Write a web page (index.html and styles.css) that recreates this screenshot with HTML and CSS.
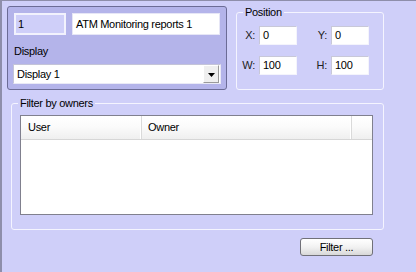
FILE: index.html
```html
<!DOCTYPE html>
<html>
<head>
<meta charset="utf-8">
<link rel="stylesheet" href="styles.css">
</head>
<body>
<div class="frame">
  <div class="top">
    <div class="panel">
      <div class="row">
        <div class="field id">1</div>
        <div class="field name">ATM Monitoring reports 1</div>
      </div>
      <div class="label">Display</div>
      <div class="select">
        <span class="select-text">Display 1</span>
        <span class="drop">
          <svg width="7" height="4" viewBox="0 0 7 4"><path d="M0 0H7L3.5 4Z" fill="#000"/></svg>
        </span>
      </div>
    </div>
    <fieldset class="group position">
      <legend>Position</legend>
      <div class="pos-grid">
        <span class="plabel">X:</span><div class="pin">0</div>
        <span class="plabel">Y:</span><div class="pin">0</div>
        <span class="plabel">W:</span><div class="pin">100</div>
        <span class="plabel">H:</span><div class="pin">100</div>
      </div>
    </fieldset>
  </div>
  <fieldset class="group owners">
    <legend>Filter by owners</legend>
    <div class="table">
      <div class="thead">
        <div class="th c1">User</div>
        <div class="th c2">Owner</div>
        <div class="th c3"></div>
      </div>
    </div>
  </fieldset>
  <div class="actions">
    <button class="btn">Filter ...</button>
  </div>
</div>
</body>
</html>
```

FILE: styles.css
```css
html, body {
  margin: 0;
  padding: 0;
}
body {
  background: #cfcff9;
  font-family: "Liberation Sans", Arial, sans-serif;
  font-size: 11px;
  letter-spacing: -0.3px;
  color: #000;
}
.frame {
  width: 416px;
  height: 272px;
  box-sizing: border-box;
  border-left: 2px solid #8e8eaa;
  border-top: 1px solid #8e8eaa;
  padding: 5px 0 0 5px;
  display: flex;
  flex-direction: column;
}
.top {
  display: flex;
  align-items: flex-start;
}
.panel {
  width: 220px;
  height: 84px;
  box-sizing: border-box;
  border: 1px solid #6c6c96;
  border-radius: 3px;
  background: #b4b4ea;
  padding: 6px 6px 0 6px;
  display: flex;
  flex-direction: column;
}
.row {
  display: flex;
  gap: 6px;
}
.field {
  height: 22px;
  box-sizing: border-box;
  display: flex;
  align-items: center;
  line-height: 13px;
}
.field.id {
  width: 52px;
  background: #cfcff9;
  border: 2px solid #f2f2fd;
  padding-left: 2px;
}
.field.name {
  width: 148px;
  background: #fff;
  border: 1px solid #e6e6f6;
  padding-left: 3px;
}
.label {
  line-height: 13px;
  margin-top: 10px;
}
.select {
  margin-top: 6px;
  margin-left: -1px;
  width: 208px;
  height: 20px;
  box-sizing: border-box;
  background: #fff;
  border: 1px solid #eaeaf6;
  border-top-color: #c4c4d8;
  border-left-color: #c4c4d8;
  display: flex;
  align-items: center;
  justify-content: space-between;
  padding: 0 1px 0 3px;
}
.select-text {
  line-height: 13px;
}
.drop {
  width: 16px;
  height: 18px;
  box-sizing: border-box;
  background: #efefef;
  border: 1px solid #fff;
  border-right-color: #9a9a9a;
  border-bottom-color: #9a9a9a;
  display: flex;
  align-items: center;
  justify-content: center;
}
.drop svg {
  display: block;
  margin-top: 1px;
}
.group {
  margin: 0;
  padding: 0;
  min-width: 0;
  border: 1px solid #f4f4ff;
  border-radius: 3px;
  box-sizing: border-box;
}
.group legend {
  margin-left: 6px;
  padding: 0 2px;
  line-height: 13px;
}
.position {
  margin-left: 9px;
  width: 148px;
  height: 84px;
}
.pos-grid {
  margin-top: 7px;
  display: grid;
  grid-template-columns: 22px 38px 34px 38px;
  grid-auto-rows: 19px;
  row-gap: 11px;
}
.plabel {
  text-align: right;
  padding-right: 4px;
  line-height: 19px;
  color: #222;
}
.pin {
  background: #fff;
  border: 1px solid #f4f4fc;
  border-top-color: #c8c8d8;
  border-left-color: #c8c8d8;
  box-sizing: border-box;
  padding-left: 3px;
  line-height: 17px;
}
.owners {
  margin-top: 7px;
  margin-left: 4px;
  width: 373px;
  height: 133px;
}
.table {
  margin-top: 5px;
  margin-left: 8px;
  width: 353px;
  height: 100px;
  box-sizing: border-box;
  background: #fff;
  border: 1px solid #80808e;
}
.thead {
  display: flex;
  height: 24px;
  box-sizing: border-box;
  border-bottom: 1px solid #d6d6d6;
  background: linear-gradient(#ffffff 0%, #fbfbfb 45%, #efefef 100%);
}
.th {
  box-sizing: border-box;
  line-height: 23px;
  border-right: 1px solid #dadada;
  box-shadow: inset -1px 0 0 #fff;
}
.c1 {
  width: 121px;
  padding-left: 7px;
}
.c2 {
  width: 210px;
  padding-left: 6px;
}
.c3 {
  flex: 1;
  border-right: none;
  box-shadow: none;
}
.actions {
  display: flex;
  justify-content: flex-end;
  margin-top: 8px;
  padding-right: 43px;
}
.btn {
  width: 73px;
  height: 18px;
  box-sizing: border-box;
  border: 1px solid #707078;
  border-radius: 3px;
  background: linear-gradient(#ffffff 0%, #f2f2f2 50%, #d8d8d8 100%);
  font-family: "Liberation Sans", Arial, sans-serif;
  font-size: 11px;
  letter-spacing: -0.3px;
  color: #000;
  padding: 0;
  line-height: 15px;
}
```
